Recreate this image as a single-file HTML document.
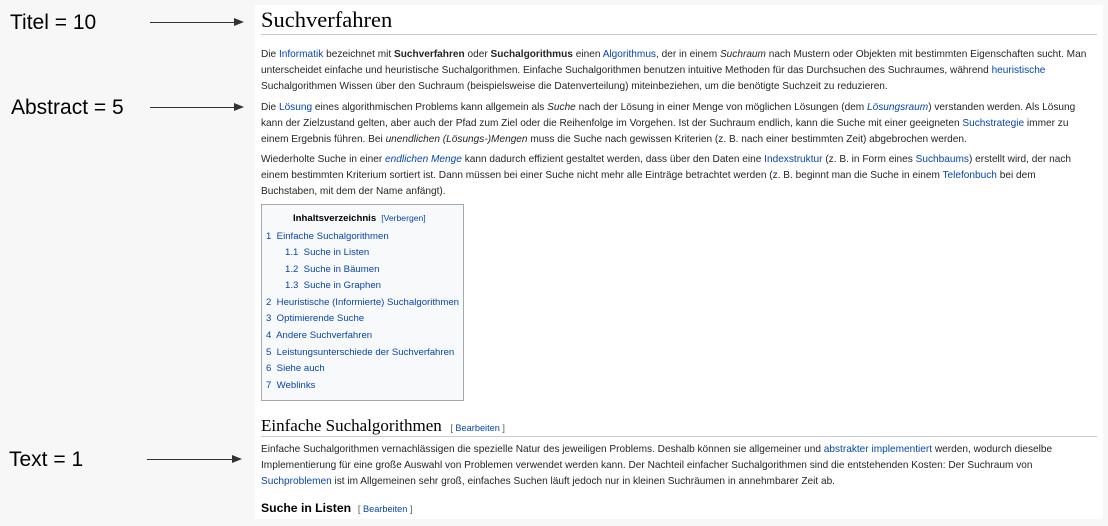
<!DOCTYPE html>
<html><head><meta charset="utf-8"><style>
body{margin:0;width:1108px;height:526px;background:#f7f7f7;position:relative;overflow:hidden;font-family:"Liberation Sans",Arial,sans-serif;color:#222}
.box{position:absolute;left:255px;top:5px;width:848px;height:514px;background:#fff}
.l{position:absolute;left:261px;font-size:10.1px;white-space:nowrap;line-height:14px;color:#252525;top:0;margin-top:1px}
a{color:#0645ad;text-decoration:none}
.lab{position:absolute;font-size:21px;color:#000;line-height:24px}
.arr{position:absolute;height:1px;background:#333}
.tip{position:absolute;width:0;height:0;border-top:4px solid transparent;border-bottom:4px solid transparent;border-left:10px solid #333}
.h1{position:absolute;left:261px;top:7px;font-family:"Liberation Serif",serif;font-size:22.5px;color:#000}
.hr{position:absolute;left:261px;width:836px;height:1px;background:#c8ccd1}
.toc{position:absolute;left:261px;top:204px;width:201px;height:195px;background:#f8f9fa;border:1px solid #a2a9b1}
.t{position:absolute;font-size:9.6px;white-space:nowrap;line-height:14px;color:#0645ad;margin-top:1px}
.ed{font-size:9.2px;color:#54595d;font-family:"Liberation Sans",sans-serif;font-weight:normal}
</style></head><body>
<div class="lab" style="left:10px;top:11px">Titel = 10</div>
<div class="lab" style="left:11px;top:96px">Abstract = 5</div>
<div class="lab" style="left:9px;top:448px">Text = 1</div>
<div class="arr" style="left:150px;top:22px;width:86px"></div><div class="tip" style="left:234px;top:18px"></div>
<div class="arr" style="left:150px;top:107px;width:86px"></div><div class="tip" style="left:234px;top:103px"></div>
<div class="arr" style="left:147px;top:459px;width:86px"></div><div class="tip" style="left:232px;top:455px"></div>
<div class="box"></div>
<div class="h1">Suchverfahren</div>
<div class="hr" style="top:34px"></div>
<div class="l" style="top:47px">Die <a>Informatik</a> bezeichnet mit <b>Suchverfahren</b> oder <b>Suchalgorithmus</b> einen <a>Algorithmus</a>, der in einem <i>Suchraum</i> nach Mustern oder Objekten mit bestimmten Eigenschaften sucht. Man</div>
<div class="l" style="top:63px">unterscheidet einfache und heuristische Suchalgorithmen. Einfache Suchalgorithmen benutzen intuitive Methoden für das Durchsuchen des Suchraumes, während <a>heuristische</a></div>
<div class="l" style="top:79px">Suchalgorithmen Wissen über den Suchraum (beispielsweise die Datenverteilung) miteinbeziehen, um die benötigte Suchzeit zu reduzieren.</div>
<div class="l" style="top:100px">Die <a>Lösung</a> eines algorithmischen Problems kann allgemein als <i>Suche</i> nach der Lösung in einer Menge von möglichen Lösungen (dem <a><i>Lösungsraum</i></a>) verstanden werden. Als Lösung</div>
<div class="l" style="top:116px">kann der Zielzustand gelten, aber auch der Pfad zum Ziel oder die Reihenfolge im Vorgehen. Ist der Suchraum endlich, kann die Suche mit einer geeigneten <a>Suchstrategie</a> immer zu</div>
<div class="l" style="top:132px">einem Ergebnis führen. Bei <i>unendlichen (Lösungs-)Mengen</i> muss die Suche nach gewissen Kriterien (z. B. nach einer bestimmten Zeit) abgebrochen werden.</div>
<div class="l" style="top:152px">Wiederholte Suche in einer <a><i>endlichen Menge</i></a> kann dadurch effizient gestaltet werden, dass über den Daten eine <a>Indexstruktur</a> (z. B. in Form eines <a>Suchbaums</a>) erstellt wird, der nach</div>
<div class="l" style="top:168px">einem bestimmten Kriterium sortiert ist. Dann müssen bei einer Suche nicht mehr alle Einträge betrachtet werden (z. B. beginnt man die Suche in einem <a>Telefonbuch</a> bei dem</div>
<div class="l" style="top:184px">Buchstaben, mit dem der Name anfängt).</div>
<div class="toc"></div>
<div class="t" style="left:293px;top:210px;color:#000;font-weight:bold;font-size:9.6px">Inhaltsverzeichnis <span style="font-weight:normal;font-size:8.6px;color:#0645ad">&nbsp;[Verbergen]</span></div>
<div class="t" style="left:266px;top:229px">1&nbsp; Einfache Suchalgorithmen</div>
<div class="t" style="left:285px;top:245px">1.1&nbsp; Suche in Listen</div>
<div class="t" style="left:285px;top:262px">1.2&nbsp; Suche in Bäumen</div>
<div class="t" style="left:285px;top:278px">1.3&nbsp; Suche in Graphen</div>
<div class="t" style="left:266px;top:295px">2&nbsp; Heuristische (Informierte) Suchalgorithmen</div>
<div class="t" style="left:266px;top:311px">3&nbsp; Optimierende Suche</div>
<div class="t" style="left:266px;top:328px">4&nbsp; Andere Suchverfahren</div>
<div class="t" style="left:266px;top:345px">5&nbsp; Leistungsunterschiede der Suchverfahren</div>
<div class="t" style="left:266px;top:361px">6&nbsp; Siehe auch</div>
<div class="t" style="left:266px;top:378px">7&nbsp; Weblinks</div>
<div style="position:absolute;left:261px;top:416px;font-family:'Liberation Serif',serif;font-size:17px;color:#000;white-space:nowrap">Einfache Suchalgorithmen &nbsp;<span class="ed">[ <a>Bearbeiten</a> ]</span></div>
<div class="hr" style="top:436px"></div>
<div class="l" style="top:442px">Einfache Suchalgorithmen vernachlässigen die spezielle Natur des jeweiligen Problems. Deshalb können sie allgemeiner und <a>abstrakter implementiert</a> werden, wodurch dieselbe</div>
<div class="l" style="top:458px">Implementierung für eine große Auswahl von Problemen verwendet werden kann. Der Nachteil einfacher Suchalgorithmen sind die entstehenden Kosten: Der Suchraum von</div>
<div class="l" style="top:474px"><a>Suchproblemen</a> ist im Allgemeinen sehr groß, einfaches Suchen läuft jedoch nur in kleinen Suchräumen in annehmbarer Zeit ab.</div>
<div style="position:absolute;left:261px;top:501px;font-size:12.2px;font-weight:bold;color:#000;white-space:nowrap">Suche in Listen &nbsp;<span class="ed">[ <a>Bearbeiten</a> ]</span></div>
</body></html>
